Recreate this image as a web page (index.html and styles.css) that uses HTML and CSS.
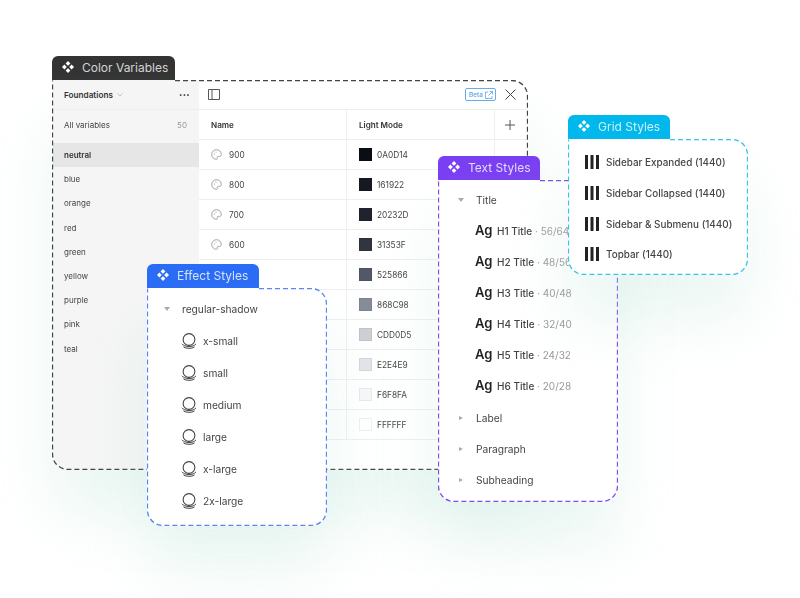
FILE: index.html
```html
<!DOCTYPE html>
<html>
<head>
	<title>Styles</title>
	<link rel="stylesheet" href="styles.css">
</head>
<body>
	<svg class="defs" width="0" height="0">
		<symbol id="comp" viewBox="0 0 12 12">
			<path d="M6 0l2.4 2.4L6 4.800 3.600 2.400zM6 7.200l2.400 2.400L6 12 3.600 9.600zM2.400 3.600L4.800 6 2.400 8.400 0 6zM9.600 3.600L12 6 9.600 8.400 7.200 6z" fill="#fff"/>
		</symbol>
		<symbol id="palette" viewBox="0 0 11 11">
			<path d="M5.500 .7a4.800 4.800 0 1 0 0 9.600c1 0 1.100-.8.800-1.400-.4-.8.100-1.500 1-1.500h1.400c.9 0 1.600-.7 1.600-1.700C10.300 2.700 8.200.7 5.500.7z" fill="none" stroke="#9a9a9a" stroke-width=".9"/>
			<circle cx="3.300" cy="5" r=".6" fill="#9a9a9a"/>
			<circle cx="5" cy="3" r=".6" fill="#9a9a9a"/>
		</symbol>
		<symbol id="shadow" viewBox="0 0 16 16">
			<circle cx="8" cy="6.500" r="5.900" fill="none" stroke="#444" stroke-width="1.100"/>
			<path d="M1 10.800c1.500 2 3.800 2.700 7 2.700s5.500-.7 7-2.700M2.500 14c1.500.9 3.300 1.300 5.500 1.300s4-.4 5.500-1.300" fill="none" stroke="#444" stroke-width="1"/>
		</symbol>
		<symbol id="grid" viewBox="0 0 14 14">
			<path d="M0 0h3v14H0zM5.500 0h3v14h-3zM11 0h3v14h-3z" fill="#222"/>
		</symbol>
	</svg>

	<div class="stage">

		<section class="panel panel-color">
			<div class="tab tab-dark"><svg class="tab-icon"><use href="#comp"/></svg>Color Variables</div>
			<div class="body color-body">
				<aside class="side">
					<div class="side-head">
						<b>Foundations</b>
						<svg class="chev" viewBox="0 0 6 4"><path d="M.5 .5L3 3 5.500 .5" fill="none" stroke="#aaa" stroke-width=".7"/></svg>
						<span class="dots">•••</span>
					</div>
					<div class="side-all"><span>All variables</span><span class="count">50</span></div>
					<ul class="groups">
						<li class="on">neutral</li>
						<li>blue</li>
						<li>orange</li>
						<li>red</li>
						<li>green</li>
						<li>yellow</li>
						<li>purple</li>
						<li>pink</li>
						<li>teal</li>
					</ul>
				</aside>
				<div class="main">
					<div class="topbar">
						<svg class="split" viewBox="0 0 12 11"><path d="M.5 .5h11v10H.5zM4 .5v10" fill="none" stroke="#444" stroke-width=".9"/></svg>
						<span class="beta">Beta<svg viewBox="0 0 8 8"><path d="M3 1H.5v6.500h6.500V5M4.500 .5h3v3M7.500 .5L3.500 4.500" fill="none" stroke="#5aa2e6" stroke-width=".8"/></svg></span>
						<svg class="close" viewBox="0 0 11 11"><path d="M.5 .5l10 10M10.500 .5l-10 10" fill="none" stroke="#444" stroke-width="1"/></svg>
					</div>
					<div class="tr th">
						<div class="td">Name</div>
						<div class="td">Light Mode</div>
						<div class="td plus">
							<svg viewBox="0 0 10 10"><path d="M5 0v10M0 5h10" fill="none" stroke="#555" stroke-width="1"/></svg>
						</div>
					</div>
					<div class="tr">
						<div class="td"><svg class="pal"><use href="#palette"/></svg>900</div>
						<div class="td"><i class="sw" style="background:#0A0D14"></i>0A0D14</div>
						<div class="td"></div>
					</div>
					<div class="tr">
						<div class="td"><svg class="pal"><use href="#palette"/></svg>800</div>
						<div class="td"><i class="sw" style="background:#161922"></i>161922</div>
						<div class="td"></div>
					</div>
					<div class="tr">
						<div class="td"><svg class="pal"><use href="#palette"/></svg>700</div>
						<div class="td"><i class="sw" style="background:#20232D"></i>20232D</div>
						<div class="td"></div>
					</div>
					<div class="tr">
						<div class="td"><svg class="pal"><use href="#palette"/></svg>600</div>
						<div class="td"><i class="sw" style="background:#31353F"></i>31353F</div>
						<div class="td"></div>
					</div>
					<div class="tr">
						<div class="td"></div>
						<div class="td"><i class="sw" style="background:#525866"></i>525866</div>
						<div class="td"></div>
					</div>
					<div class="tr">
						<div class="td"></div>
						<div class="td"><i class="sw" style="background:#868C98"></i>868C98</div>
						<div class="td"></div>
					</div>
					<div class="tr">
						<div class="td"></div>
						<div class="td"><i class="sw" style="background:#CDD0D5"></i>CDD0D5</div>
						<div class="td"></div>
					</div>
					<div class="tr">
						<div class="td"></div>
						<div class="td"><i class="sw" style="background:#E2E4E9"></i>E2E4E9</div>
						<div class="td"></div>
					</div>
					<div class="tr">
						<div class="td"></div>
						<div class="td"><i class="sw" style="background:#F6F8FA"></i>F6F8FA</div>
						<div class="td"></div>
					</div>
					<div class="tr">
						<div class="td"></div>
						<div class="td"><i class="sw" style="background:#FFFFFF"></i>FFFFFF</div>
						<div class="td"></div>
					</div>
				</div>
				<svg class="dash dash-color" width="476" height="390"><path d="M123 .5H460a15.500 15.500 0 0 1 15.500 15.500V374a15.500 15.500 0 0 1-15.500 15.500H16A15.500 15.500 0 0 1 .5 374V.5"/></svg>
			</div>
		</section>

		<section class="panel panel-effect">
			<div class="tab tab-blue"><svg class="tab-icon"><use href="#comp"/></svg>Effect Styles</div>
			<div class="body rows-body effect-body">
				<div class="row group"><i class="caret-down"></i>regular-shadow</div>
				<div class="row item"><svg class="shadow"><use href="#shadow"/></svg>x-small</div>
				<div class="row item"><svg class="shadow"><use href="#shadow"/></svg>small</div>
				<div class="row item"><svg class="shadow"><use href="#shadow"/></svg>medium</div>
				<div class="row item"><svg class="shadow"><use href="#shadow"/></svg>large</div>
				<div class="row item"><svg class="shadow"><use href="#shadow"/></svg>x-large</div>
				<div class="row item"><svg class="shadow"><use href="#shadow"/></svg>2x-large</div>
				<svg class="dash dash-blue" width="180" height="238"><path d="M112 .5H164a15.500 15.500 0 0 1 15.500 15.500V222a15.500 15.500 0 0 1-15.500 15.500H16A15.500 15.500 0 0 1 .5 222V.5"/></svg>
			</div>
		</section>

		<section class="panel panel-text">
			<div class="tab tab-purple"><svg class="tab-icon"><use href="#comp"/></svg>Text Styles</div>
			<div class="body rows-body text-body">
				<div class="row group"><i class="caret-down"></i>Title</div>
				<div class="row ag-row"><span class="ag">Ag</span>H1 Title<span class="spec"> · 56/64</span></div>
				<div class="row ag-row"><span class="ag">Ag</span>H2 Title<span class="spec"> · 48/56</span></div>
				<div class="row ag-row"><span class="ag">Ag</span>H3 Title<span class="spec"> · 40/48</span></div>
				<div class="row ag-row"><span class="ag">Ag</span>H4 Title<span class="spec"> · 32/40</span></div>
				<div class="row ag-row"><span class="ag">Ag</span>H5 Title<span class="spec"> · 24/32</span></div>
				<div class="row ag-row last-ag"><span class="ag">Ag</span>H6 Title<span class="spec"> · 20/28</span></div>
				<div class="row group"><i class="caret-right"></i>Label</div>
				<div class="row group"><i class="caret-right"></i>Paragraph</div>
				<div class="row group"><i class="caret-right"></i>Subheading</div>
				<svg class="dash dash-purple" width="180" height="322"><path d="M102 .5H164a15.500 15.500 0 0 1 15.500 15.500V306a15.500 15.500 0 0 1-15.500 15.500H16A15.500 15.500 0 0 1 .5 306V.5"/></svg>
			</div>
		</section>

		<section class="panel panel-grid">
			<div class="tab tab-cyan"><svg class="tab-icon"><use href="#comp"/></svg>Grid Styles</div>
			<div class="body rows-body grid-body">
				<div class="row"><svg class="bars"><use href="#grid"/></svg>Sidebar Expanded (1440)</div>
				<div class="row"><svg class="bars"><use href="#grid"/></svg>Sidebar Collapsed (1440)</div>
				<div class="row"><svg class="bars"><use href="#grid"/></svg>Sidebar &amp; Submenu (1440)</div>
				<div class="row"><svg class="bars"><use href="#grid"/></svg>Topbar (1440)</div>
				<svg class="dash dash-cyan" width="180" height="136"><path d="M102 .5H164a15.500 15.500 0 0 1 15.500 15.500V120a15.500 15.500 0 0 1-15.500 15.500H16A15.500 15.500 0 0 1 .5 120V.5"/></svg>
			</div>
		</section>

	</div>
</body>
</html>
```

FILE: styles.css
```css
body {
	margin: 0;
	background: #fff;
	font-family: Inter, "Liberation Sans", sans-serif;
	color: #444;
}
.defs {
	position: absolute;
}
.stage {
	position: relative;
	width: 800px;
	height: 598px;
	overflow: hidden;
	filter: blur(.45px);
}

/* the four windows sit on a free canvas */
.panel {
	position: absolute;
}
.panel-color {
	left: 52px;
	top: 56px;
	width: 476px;
}
.panel-effect {
	left: 147px;
	top: 264px;
	width: 180px;
}
.panel-text {
	left: 438px;
	top: 156px;
	width: 180px;
}
.panel-grid {
	left: 568px;
	top: 115px;
	width: 180px;
}

.tab {
	display: inline-flex;
	align-items: center;
	height: 24px;
	padding: 0 0 2px 10px;
	box-sizing: border-box;
	border-radius: 6px 6px 0 0;
	font-size: 12px;
	white-space: nowrap;
	color: rgba(255, 255, 255, .8);
	vertical-align: top;
}
.tab-icon {
	width: 12px;
	height: 12px;
	margin-right: 8px;
	flex: none;
}
.tab-dark { width: 123px; background: #333; }
.tab-blue { width: 112px; background: #2b6cf6; }
.tab-purple { width: 102px; background: #7a3ff2; }
.tab-cyan { width: 102px; background: #00b8ec; }

.body {
	position: relative;
	background: #fff;
	border-radius: 0 16px 16px 16px;
	box-shadow: 0 44px 60px rgba(190, 228, 215, .3);
}
.dash {
	position: absolute;
	left: 0;
	top: 0;
	fill: none;
	stroke-width: 1.300;
	stroke-dasharray: 5 3;
	pointer-events: none;
}
.dash-color { stroke: #444; }
.dash-blue { stroke: #5b85f0; }
.dash-purple { stroke: #7c4df0; }
.dash-cyan { stroke: #38c6e8; }

/* color variables window */
.color-body {
	display: flex;
	height: 390px;
}
.side {
	width: 146px;
	margin-left: 1px;
	background: #f5f5f5;
	border-radius: 0 0 0 16px;
	font-size: 8px;
}
.side-head {
	display: flex;
	align-items: center;
	height: 30px;
	padding: 0 9px 0 11px;
	border-bottom: 1px solid #eee;
	box-sizing: border-box;
	color: #333;
}
.side-head b {
	font-weight: 600;
	font-size: 8.200px;
}
.chev {
	width: 6px;
	height: 4px;
	margin-left: 4px;
}
.dots {
	margin-left: auto;
	font-size: 6px;
	letter-spacing: .3px;
	color: #333;
}
.side-all {
	display: flex;
	justify-content: space-between;
	align-items: center;
	height: 30px;
	padding: 0 12px 0 11px;
}
.count {
	color: #999;
}
.groups {
	list-style: none;
	margin: 3px 0 0;
	padding: 0;
}
.groups li {
	display: flex;
	align-items: center;
	height: 24.200px;
	padding-left: 11px;
}
.groups .on {
	background: #e6e6e6;
	color: #333;
	font-weight: 600;
}
.main {
	width: 329px;
}
.topbar {
	display: flex;
	align-items: center;
	height: 30px;
	padding: 0 12px 0 9px;
	box-sizing: border-box;
	border-bottom: 1px solid #eee;
}
.split {
	width: 12px;
	height: 11px;
}
.beta {
	display: flex;
	align-items: center;
	gap: 2px;
	height: 13px;
	margin-left: auto;
	padding: 0 2px 0 3px;
	border: 1px solid #69abe8;
	border-radius: 2px;
	box-sizing: border-box;
	font-size: 6.500px;
	font-weight: 500;
	color: #5aa2e6;
}
.beta svg {
	width: 8px;
	height: 8px;
}
.close {
	width: 11px;
	height: 11px;
	margin-left: 9px;
}
.tr {
	display: grid;
	grid-template-columns: 148px 148px 33px;
	height: 30px;
	box-sizing: border-box;
	border-bottom: 1px solid #efefef;
	font-size: 8.300px;
}
.th {
	font-weight: 600;
	font-size: 8.100px;
	color: #333;
}
.td {
	display: flex;
	align-items: center;
	padding-left: 12px;
	border-right: 1px solid #efefef;
}
.td:last-child {
	border-right: 0;
	padding-left: 10px;
}
.plus svg {
	width: 10px;
	height: 10px;
}
.pal {
	width: 11px;
	height: 11px;
	margin-right: 7px;
}
.sw {
	width: 13px;
	height: 13px;
	margin-right: 5px;
	box-sizing: border-box;
	border: 1px solid rgba(0, 0, 0, .06);
}

/* list windows */
.rows-body {
	font-size: 10.200px;
	color: #444;
}
.row {
	display: flex;
	align-items: center;
	white-space: nowrap;
}
.effect-body {
	height: 238px;
	padding: 4.500px 0 0 17px;
	box-sizing: border-box;
}
.effect-body .row {
	height: 32px;
}
.effect-body .item {
	padding-left: 17px;
}
.effect-body .group i {
	margin-right: 12px;
}
.shadow {
	width: 16px;
	height: 16px;
	margin-right: 6px;
}
.text-body {
	height: 322px;
	padding: 4.500px 0 0 20px;
	box-sizing: border-box;
}
.text-body .row {
	height: 31px;
}
.text-body .last-ag {
	margin-bottom: 1px;
}
.text-body .group i {
	margin-right: 12px;
}
.text-body .group .caret-right {
	margin-right: 13px;
}
.caret-down {
	width: 0;
	height: 0;
	border: 3px solid transparent;
	border-top: 4px solid #aaa;
	border-bottom: 0;
}
.caret-right {
	width: 0;
	height: 0;
	margin-left: 1px;
	border: 2.500px solid transparent;
	border-left: 4px solid #aaa;
	border-right: 0;
}
.ag-row {
	padding-left: 17px;
	font-weight: 500;
	font-size: 10px;
}
.ag {
	width: 22px;
	margin-top: -3px;
	font-size: 13px;
	font-weight: 600;
	color: #222;
}
.spec {
	white-space: pre;
	font-weight: 400;
	color: #999;
}
.grid-body {
	height: 136px;
	padding: 8.200px 0 0 17px;
	box-sizing: border-box;
	font-weight: 500;
	font-size: 9.900px;
}
.grid-body .row {
	height: 30.600px;
}
.bars {
	width: 14px;
	height: 14px;
	margin-right: 7px;
}
```
